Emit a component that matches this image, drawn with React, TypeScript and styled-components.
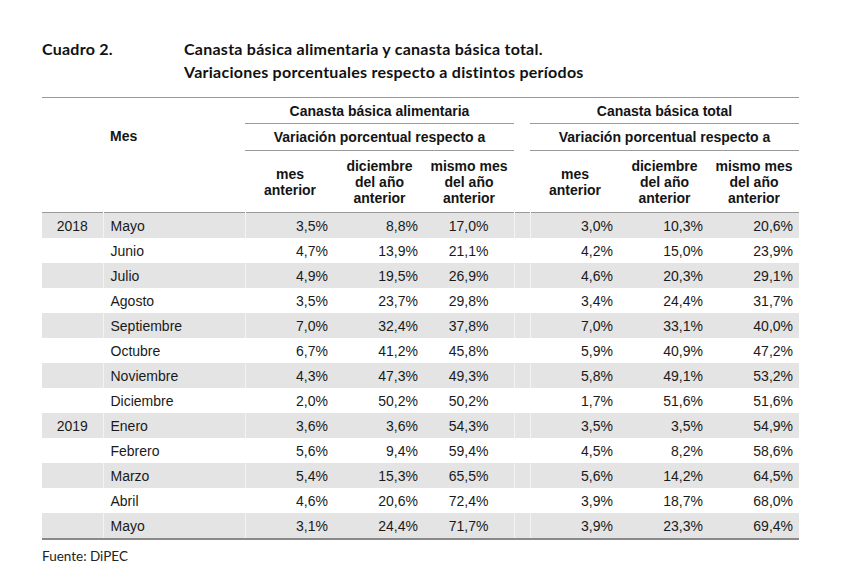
import React from "react";
import styled, { createGlobalStyle } from "styled-components";

const Global = createGlobalStyle`
  html, body { margin: 0; padding: 0; background: #ffffff; }
  body { font-family: "Liberation Sans", Arial, sans-serif; color: #1a1a1a; }
`;

const Page = styled.div`
  width: 859px;
  height: 580px;
  box-sizing: border-box;
  padding: 37px 0 0 42px;
`;

const TitleBlock = styled.div`
  display: grid;
  grid-template-columns: 142px auto;
  font-family: Lato, "Open Sans", sans-serif;
  font-weight: 700;
  font-size: 16px;
  letter-spacing: 0.25px;
  line-height: 23px;
  color: #111;
`;

const TitleLines = styled.div`
  display: flex;
  flex-direction: column;
`;

const Table = styled.table`
  margin-top: 14px;
  border-collapse: collapse;
  table-layout: fixed;
  width: 757px;
  font-size: 14px;
`;

const HeadRule = styled.tr`
  border-top: 1px solid #9a9a9a;
`;

const Th = styled.th<{ $rule?: boolean; $align?: string; $h?: number; $pl?: number; $top?: number }>`
  font-weight: 700;
  padding: ${(p) => p.$top ?? 0}px 0 0 ${(p) => p.$pl ?? 0}px;
  height: ${(p) => p.$h ?? 25}px;
  text-align: ${(p) => p.$align ?? "center"};
  vertical-align: ${(p) => (p.$top !== undefined ? "top" : "middle")};
  line-height: 16px;
  border-bottom: ${(p) => (p.$rule ? "1px solid #9a9a9a" : "none")};
  color: #141414;
`;

const Row = styled.tr<{ $shade: boolean }>`
  background: ${(p) => (p.$shade ? "#e4e4e4" : "#ffffff")};
  height: 25px;
`;

const Td = styled.td<{ $align?: string; $pr?: number; $pl?: number; $sep?: boolean }>`
  padding: 0 ${(p) => p.$pr ?? 0}px 0 ${(p) => p.$pl ?? 0}px;
  text-align: ${(p) => p.$align ?? "right"};
  vertical-align: middle;
  height: 25px;
  line-height: 16px;
  white-space: nowrap;
  border-left: ${(p) => (p.$sep ? "1px solid rgba(255,255,255,0.55)" : "none")};
`;

const Body = styled.tbody`
  border-top: 1px solid #9a9a9a;
  border-bottom: 2px solid #8a8a8a;
`;

const Source = styled.div`
  margin-top: 8px;
  font-family: Lato, "Open Sans", sans-serif;
  font-size: 13.5px;
  color: #222;
`;

type R = { year?: string; mes: string; v: string[] };

const rows: R[] = [
  { year: "2018", mes: "Mayo", v: ["3,5%", "8,8%", "17,0%", "3,0%", "10,3%", "20,6%"] },
  { mes: "Junio", v: ["4,7%", "13,9%", "21,1%", "4,2%", "15,0%", "23,9%"] },
  { mes: "Julio", v: ["4,9%", "19,5%", "26,9%", "4,6%", "20,3%", "29,1%"] },
  { mes: "Agosto", v: ["3,5%", "23,7%", "29,8%", "3,4%", "24,4%", "31,7%"] },
  { mes: "Septiembre", v: ["7,0%", "32,4%", "37,8%", "7,0%", "33,1%", "40,0%"] },
  { mes: "Octubre", v: ["6,7%", "41,2%", "45,8%", "5,9%", "40,9%", "47,2%"] },
  { mes: "Noviembre", v: ["4,3%", "47,3%", "49,3%", "5,8%", "49,1%", "53,2%"] },
  { mes: "Diciembre", v: ["2,0%", "50,2%", "50,2%", "1,7%", "51,6%", "51,6%"] },
  { year: "2019", mes: "Enero", v: ["3,6%", "3,6%", "54,3%", "3,5%", "3,5%", "54,9%"] },
  { mes: "Febrero", v: ["5,6%", "9,4%", "59,4%", "4,5%", "8,2%", "58,6%"] },
  { mes: "Marzo", v: ["5,4%", "15,3%", "65,5%", "5,6%", "14,2%", "64,5%"] },
  { mes: "Abril", v: ["4,6%", "20,6%", "72,4%", "3,9%", "18,7%", "68,0%"] },
  { mes: "Mayo", v: ["3,1%", "24,4%", "71,7%", "3,9%", "23,3%", "69,4%"] },
];

const SubHead = () => (
  <>
    <Th $h={61}>mes<br />anterior</Th>
    <Th $h={61}>diciembre<br />del año<br />anterior</Th>
    <Th $h={61}>mismo mes<br />del año<br />anterior</Th>
  </>
);

export default function App() {
  return (
    <Page>
      <Global />
      <TitleBlock>
        <span>Cuadro 2.</span>
        <TitleLines>
          <span>Canasta básica alimentaria y canasta básica total.</span>
          <span>Variaciones porcentuales respecto a distintos períodos</span>
        </TitleLines>
      </TitleBlock>
      <Table>
        <colgroup>
          <col style={{ width: 61 }} />
          <col style={{ width: 142 }} />
          <col style={{ width: 90 }} />
          <col style={{ width: 89 }} />
          <col style={{ width: 90 }} />
          <col style={{ width: 16 }} />
          <col style={{ width: 90 }} />
          <col style={{ width: 89 }} />
          <col style={{ width: 90 }} />
        </colgroup>
        <thead>
          <HeadRule>
            <Th rowSpan={3} />
            <Th rowSpan={3} $align="left" $pl={7} $top={30}>Mes</Th>
            <Th colSpan={3} $rule>Canasta básica alimentaria</Th>
            <Th rowSpan={3} />
            <Th colSpan={3} $rule>Canasta básica total</Th>
          </HeadRule>
          <tr>
            <Th colSpan={3} $rule $h={26}>Variación porcentual respecto a</Th>
            <Th colSpan={3} $rule $h={26}>Variación porcentual respecto a</Th>
          </tr>
          <tr>
            <SubHead />
            <SubHead />
          </tr>
        </thead>
        <Body>
          {rows.map((r, i) => (
            <Row key={i} $shade={i % 2 === 0}>
              <Td $align="center">{r.year ?? ""}</Td>
              <Td $align="left" $pl={7} $sep>{r.mes}</Td>
              <Td $pr={7} $sep>{r.v[0]}</Td>
              <Td $pr={6}>{r.v[1]}</Td>
              <Td $pr={25}>{r.v[2]}</Td>
              <Td $sep />
              <Td $pr={7} $sep>{r.v[3]}</Td>
              <Td $pr={6}>{r.v[4]}</Td>
              <Td $pr={6}>{r.v[5]}</Td>
            </Row>
          ))}
        </Body>
      </Table>
      <Source>Fuente: DiPEC</Source>
    </Page>
  );
}
